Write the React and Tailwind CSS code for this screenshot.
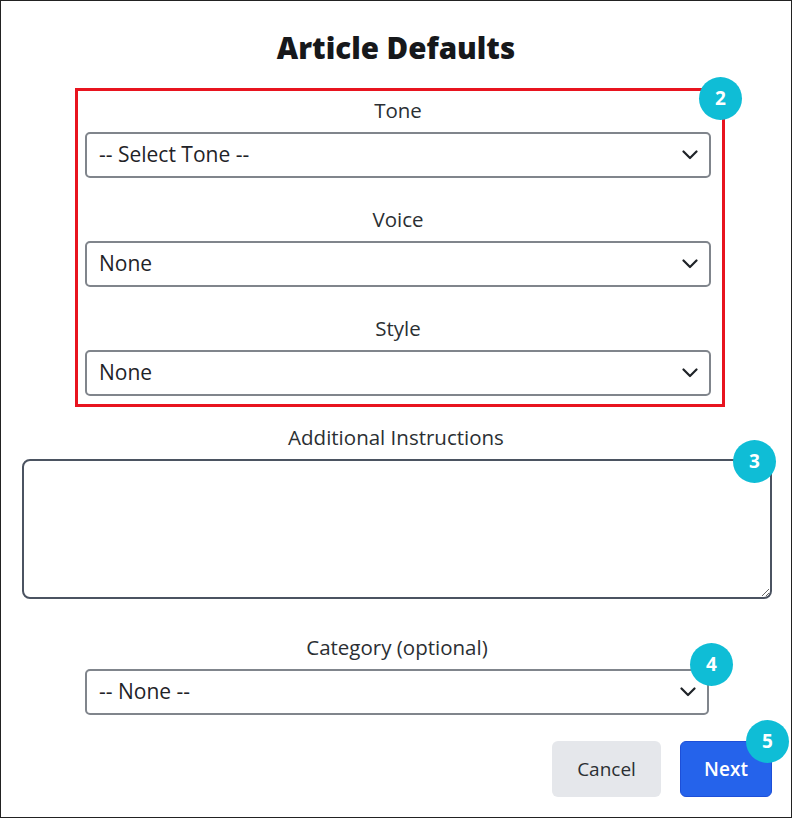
import React from "react";

function Badge({ n, className }) {
  return (
    <div
      className={`absolute flex h-[43px] w-[43px] items-center justify-center rounded-full bg-[#0fbdd6] text-[19px] font-bold text-white ${className}`}
    >
      {n}
    </div>
  );
}

function Chevron() {
  return (
    <svg width="16" height="10" viewBox="0 0 16 10" className="pointer-events-none absolute right-[13px] top-1/2 -translate-y-1/2">
      <polyline points="1.5,1.5 8,8 14.5,1.5" fill="none" stroke="#1f2328" strokeWidth="2.2" strokeLinecap="round" strokeLinejoin="round" />
    </svg>
  );
}

function SelectField({ label, value, className = "" }) {
  return (
    <div className={className}>
      <div className="mb-[8px] h-[28px] text-center text-[20.5px] leading-[28px] text-[#2b2f33]">{label}</div>
      <div className="relative">
        <select
          defaultValue={value}
          className="h-[46px] w-full appearance-none rounded-[5px] border-2 border-[#80858c] bg-white pl-[12px] text-[21px] text-[#1f2328] outline-none"
        >
          <option>{value}</option>
        </select>
        <Chevron />
      </div>
    </div>
  );
}

export default function App() {
  return (
    <div
      className="relative h-[818px] w-[792px] border border-[#222] bg-white"
      style={{ fontFamily: '"Open Sans", "Noto Sans", sans-serif' }}
    >
      <h2 className="pt-[29px] text-center text-[29.5px] font-extrabold leading-[36px] text-[#16181b]">
        Article Defaults
      </h2>

      <div className="relative ml-[74px] mt-[22px] w-[650px] border-[3px] border-[#e8141f] pb-[8px] pl-[7px] pr-[11px] pt-[5px]">
        <SelectField label="Tone" value="-- Select Tone --" />
        <SelectField label="Voice" value="None" className="mt-[27px]" />
        <SelectField label="Style" value="None" className="mt-[27px]" />
        <Badge n="2" className="-right-[20px] -top-[14px]" />
      </div>

      <div className="mt-[16px] h-[28px] text-center text-[20.5px] leading-[28px] text-[#2b2f33]">
        Additional Instructions
      </div>
      <div className="relative ml-[21px] mt-[8px] w-[750px]">
        <textarea className="block h-[140px] w-full rounded-[8px] border-2 border-[#4b5361] bg-white outline-none" />
        <Badge n="3" className="-right-[4px] -top-[19px]" />
      </div>

      <div className="relative ml-[84px] mt-[34px] w-[624px]">
        <SelectField label="Category (optional)" value="-- None --" />
        <Badge n="4" className="-right-[24px] top-[10px]" />
      </div>

      <div className="mr-[19px] mt-[26px] flex justify-end gap-[19px]">
        <button className="h-[56px] w-[109px] rounded-[6px] bg-[#e5e7eb] text-[19px] text-[#2b2f33]">Cancel</button>
        <div className="relative">
          <button className="h-[56px] w-[92px] rounded-[6px] border border-[#1d4fd8] bg-[#2563eb] text-[19px] font-semibold text-white">
            Next
          </button>
          <Badge n="5" className="-right-[17px] -top-[21px]" />
        </div>
      </div>
    </div>
  );
}
